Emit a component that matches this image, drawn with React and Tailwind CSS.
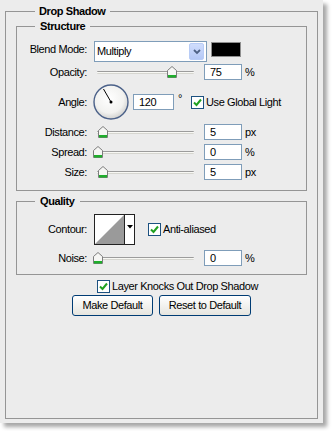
import React from 'react';

function Thumb({ left }) {
  return (
    <svg className="absolute top-[2px]" style={{ left }} width="10" height="12" viewBox="0 0 10 12">
      <path d="M0.5 4.5 L5 0.5 L9.5 4.5 V11.5 H0.5 Z" fill="#f6f6f4" stroke="#7d7d7d" />
      <rect x="1" y="9" width="8" height="2.5" fill="#1fae2b" />
    </svg>
  );
}

function Slider({ pos }) {
  return (
    <div className="relative ml-[6px] w-[111px] h-[16px]">
      <div className="absolute left-[4px] top-[7px] w-[97px] h-[3px] rounded-[1px] border-t border-b border-t-[#9c9c9c] border-b-[#d6d6d0] bg-[#f8f8f4]" />
      <Thumb left={pos} />
    </div>
  );
}

function NumBox({ value, className = '' }) {
  return (
    <div className={`h-[16px] border border-[#7f9db9] bg-white pl-[5px] leading-[14px] ${className}`}>
      {value}
    </div>
  );
}

function Check() {
  return (
    <span className="flex w-[13px] h-[13px] items-center justify-center border border-[#1c5180] bg-white">
      <svg width="9" height="9" viewBox="0 0 9 9">
        <path d="M1 4.5 L3.5 7 L8 1.5" fill="none" stroke="#21a121" strokeWidth="2" />
      </svg>
    </span>
  );
}

function SliderRow({ label, pos, value, unit, className = '' }) {
  return (
    <div className={`flex items-center h-[16px] ${className}`}>
      <span className="w-[70px] text-right">{label}</span>
      <Slider pos={pos} />
      <NumBox value={value} className="w-[38px]" />
      <span className="ml-[3px]">{unit}</span>
    </div>
  );
}

function Legend({ children, className = '' }) {
  return <legend className={`px-[4px] font-bold leading-[14px] ${className}`}>{children}</legend>;
}

export default function App() {
  return (
    <div className="w-[335px] h-[431px] bg-white font-['Liberation_Sans',Arial,sans-serif] text-[11px] tracking-[-0.4px] text-black">
      <div className="w-[323px] h-[423px] bg-[#ececec] pt-[4px] shadow-[4px_4px_4px_rgba(0,0,0,0.35)]">
        <fieldset className="ml-[5px] w-[313px] h-[415px] border border-[#959595] px-[10px]">
          <Legend className="ml-[19px]">Drop Shadow</Legend>

          {/* Structure */}
          <fieldset className="mt-[1px] border border-[#959595] pb-[10px]">
            <Legend className="ml-[18px] px-[5px]">Structure</Legend>

            <div className="flex items-center h-[21px] mt-[8px]">
              <span className="w-[70px] text-right pb-[4px]">Blend Mode:</span>
              <div className="ml-[7px] flex items-center justify-between w-[113px] h-[21px] border border-[#7f9db9] bg-white pl-[2px] pr-[2px]">
                <span>Multiply</span>
                <span className="flex items-center justify-center w-[15px] h-[17px] rounded-[2px] border border-[#b8ccf6] bg-gradient-to-b from-[#d0ddfc] to-[#b4c8f6]">
                  <svg width="8" height="6" viewBox="0 0 8 6">
                    <path d="M1 1 L4 4 L7 1" fill="none" stroke="#4d6185" strokeWidth="1.8" />
                  </svg>
                </span>
              </div>
              <div className="self-start mt-[1px] ml-[4px] w-[30px] h-[15px] border border-[#8f8f8f] bg-black" />
            </div>

            <SliderRow label="Opacity:" pos={74} value="75" unit="%" className="mt-[2px]" />

            <div className="flex items-center h-[36px] mt-[4px]">
              <span className="w-[70px] text-right">Angle:</span>
              <svg className="ml-[6px]" width="36" height="36" viewBox="0 0 36 36">
                <defs>
                  <radialGradient id="dial" cx="0.45" cy="0.4" r="0.6">
                    <stop offset="0" stopColor="#ffffff" />
                    <stop offset="0.7" stopColor="#f2f2f0" />
                    <stop offset="1" stopColor="#d2d2d0" />
                  </radialGradient>
                </defs>
                <circle cx="18" cy="18" r="17" fill="url(#dial)" stroke="#4b6189" strokeWidth="1.4" />
                <line x1="18" y1="18" x2="10.5" y2="5" stroke="#000" strokeWidth="1" />
                <circle cx="18" cy="18" r="1.5" fill="#000" />
              </svg>
              <NumBox value="120" className="ml-[4px] w-[41px]" />
              <span className="ml-[4px] self-start mt-[6px]">°</span>
              <span className="ml-[9px]"><Check /></span>
              <span className="ml-[2px]">Use Global Light</span>
            </div>

            <SliderRow label="Distance:" pos={5} value="5" unit="px" className="mt-[4px]" />
            <SliderRow label="Spread:" pos={0} value="0" unit="%" className="mt-[4px]" />
            <SliderRow label="Size:" pos={5} value="5" unit="px" className="mt-[4px]" />
          </fieldset>

          {/* Quality */}
          <fieldset className="mt-[3px] border border-[#959595] pb-[8px]">
            <Legend className="ml-[18px] px-[5px]">Quality</Legend>

            <div className="flex items-center h-[31px] mt-[6px]">
              <span className="w-[70px] text-right">Contour:</span>
              <div className="ml-[7px] flex w-[41px] h-[31px] border border-[#222] bg-white">
                <svg width="29" height="29" viewBox="0 0 29 29">
                  <polygon points="0,29 29,0 29,29" fill="#9a9a9a" />
                </svg>
                <div className="flex justify-center w-[10px] border-l border-[#222] pt-[10px]">
                  <svg width="6" height="4" viewBox="0 0 6 4">
                    <polygon points="0,0 6,0 3,3.5" fill="#000" />
                  </svg>
                </div>
              </div>
              <span className="ml-[13px]"><Check /></span>
              <span className="ml-[2px]">Anti-aliased</span>
            </div>

            <SliderRow label="Noise:" pos={0} value="0" unit="%" className="mt-[5px]" />
          </fieldset>

          <div className="flex items-center h-[13px] mt-[5px] ml-[81px]">
            <Check />
            <span className="ml-[2px]">Layer Knocks Out Drop Shadow</span>
          </div>

          <div className="flex mt-[2px] ml-[56px] gap-[6px]">
            <button className="w-[81px] h-[21px] rounded-[3px] border border-[#003c74] bg-gradient-to-b from-white to-[#e6e5df]">
              Make Default
            </button>
            <button className="w-[92px] h-[21px] rounded-[3px] border border-[#003c74] bg-gradient-to-b from-white to-[#e6e5df]">
              Reset to Default
            </button>
          </div>
        </fieldset>
      </div>
    </div>
  );
}
